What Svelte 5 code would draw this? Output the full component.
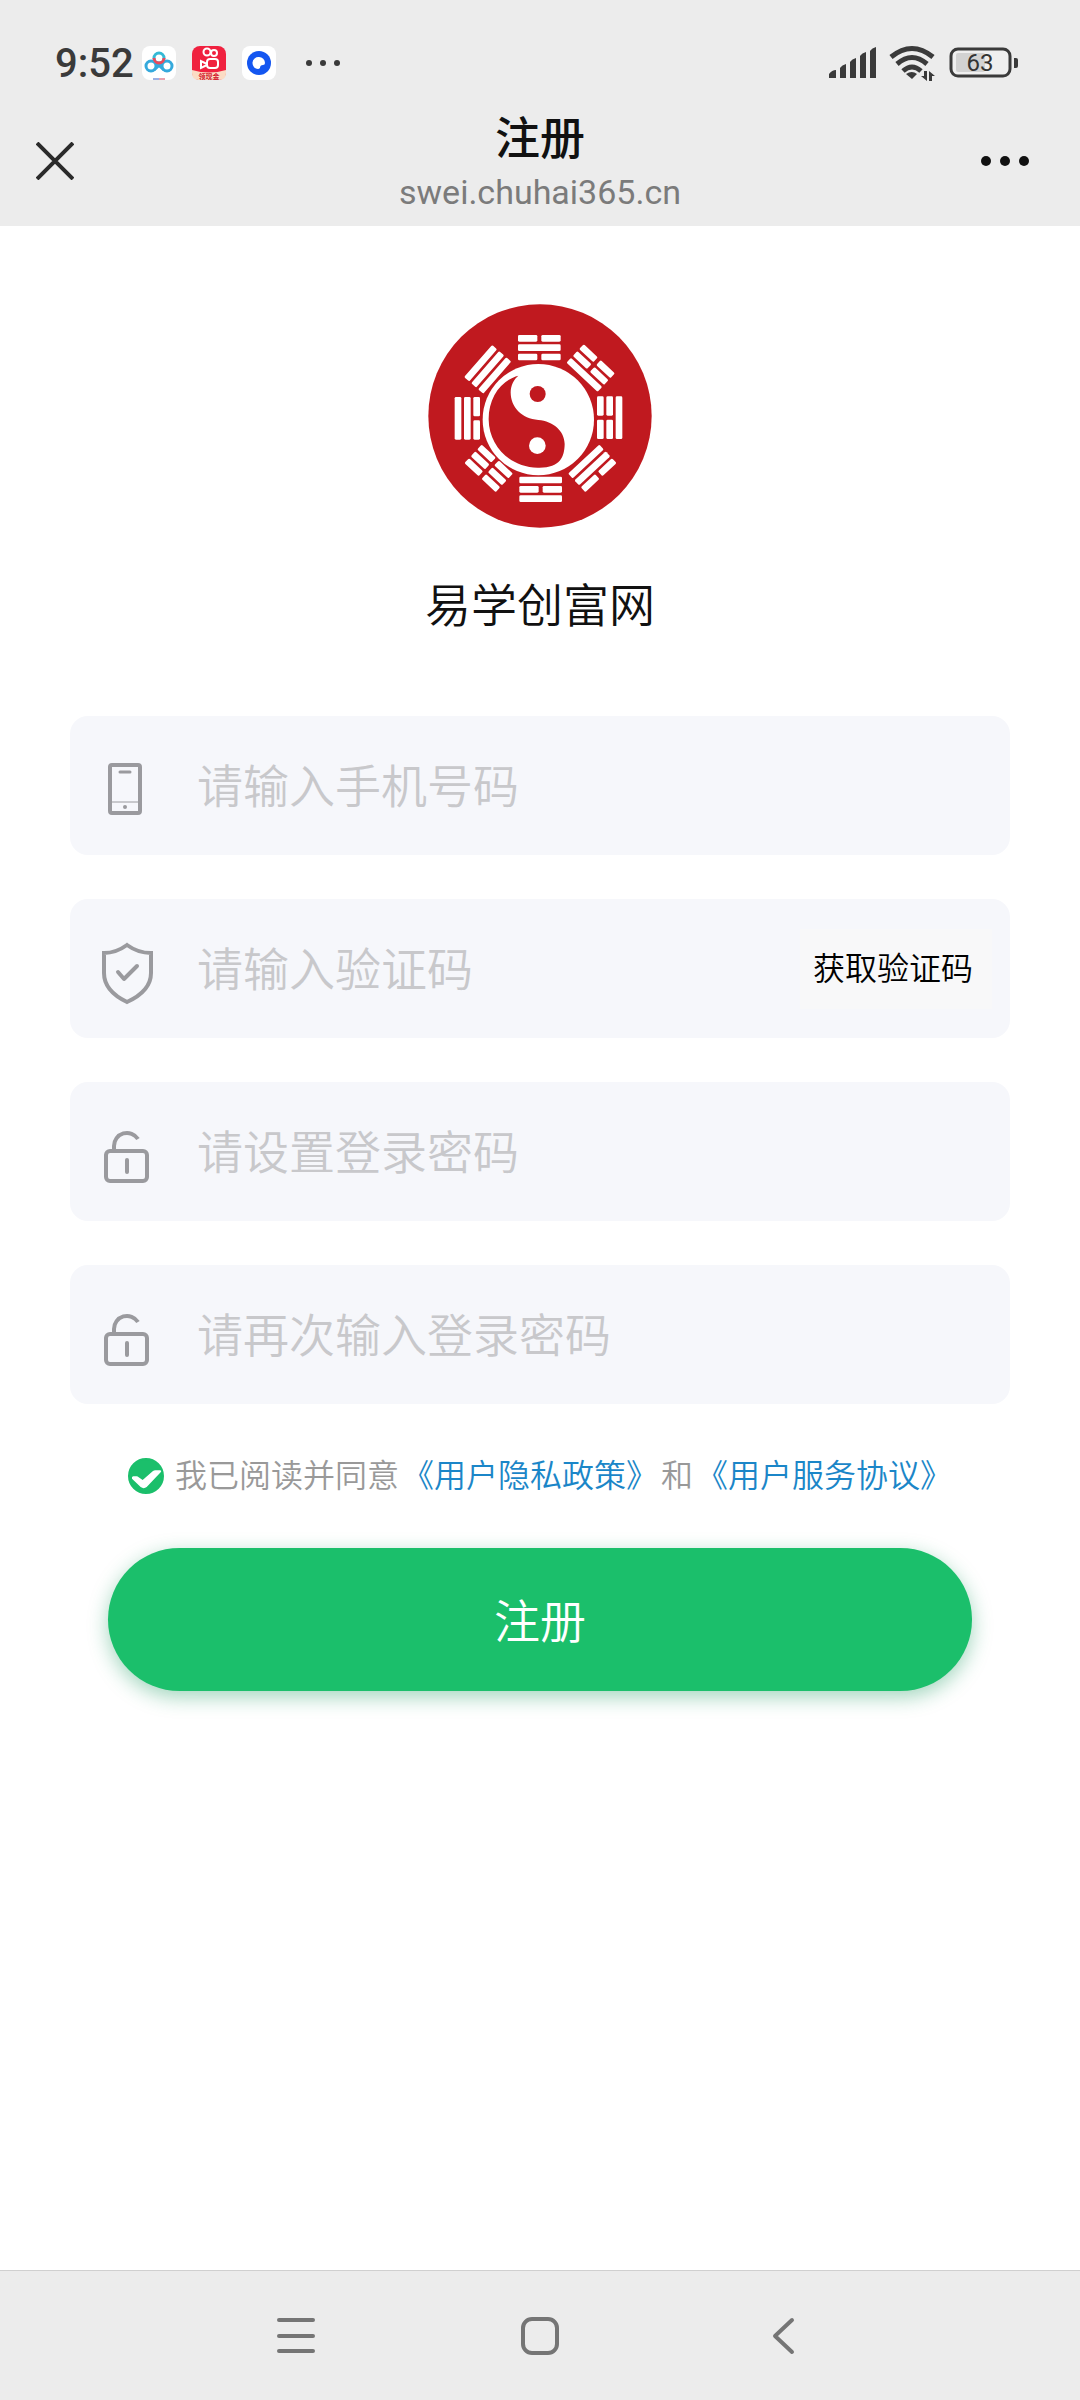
<script lang="ts">
	type Trigram = { x: number; y: number; angle: number; bars: boolean[] };

	// bars run from the rim to the centre, true is an unbroken line
	const trigrams: Trigram[] = [
		{ x: 388, y: 171, angle: 0, bars: [false, true, false] },
		{ x: 542, y: 232, angle: 43, bars: [false, false, true] },
		{ x: 599, y: 381, angle: 90, bars: [true, false, false] },
		{ x: 547, y: 533, angle: 137, bars: [false, true, true] },
		{ x: 392, y: 596, angle: 180, bars: [true, false, true] },
		{ x: 236, y: 533, angle: 223, bars: [false, false, false] },
		{ x: 172, y: 383, angle: 270, bars: [true, true, false] },
		{ x: 233, y: 236, angle: 311, bars: [true, true, true] }
	];

	const fields = [
		{ id: 'phone', icon: 'phone', type: 'tel', placeholder: '请输入手机号码' },
		{ id: 'code', icon: 'shield', type: 'text', placeholder: '请输入验证码' },
		{ id: 'password', icon: 'lock', type: 'password', placeholder: '请设置登录密码' },
		{ id: 'repeat', icon: 'lock', type: 'password', placeholder: '请再次输入登录密码' }
	];

	let values: Record<string, string> = $state({ phone: '', code: '', password: '', repeat: '' });
	let agreed = $state(true);
</script>

<div class="page">
	<header>
		<div class="status">
			<span class="time">9:52</span>
			<svg class="app" viewBox="0 0 34 34">
				<rect width="34" height="34" rx="8" fill="#fff" />
				<g fill="none" stroke-width="3">
					<circle cx="9" cy="20" r="5" stroke="#35a9dc" />
					<circle cx="25" cy="20" r="5" stroke="#35a9dc" />
					<path d="M12 24L22 15M22 24L12 15" stroke="#35a9dc" />
					<circle cx="17" cy="12" r="5" stroke="#35b9d5" fill="#fff" />
					<path d="M12 12a5 5 0 0 0 10 0" stroke="#e94a5c" />
				</g>
				<path d="M11 33h6" stroke="#3a62c8" stroke-width="1" />
				<path d="M17 33h6" stroke="#d2445c" stroke-width="1" />
			</svg>
			<svg class="app" viewBox="0 0 34 34">
				<rect width="34" height="34" rx="8" fill="#f0213f" />
				<path d="M0 24q17 5 34 0v3q0 7-7 7H7q-7 0-7-7z" fill="#fbdcc4" />
				<g fill="none" stroke="#fff" stroke-width="2">
					<circle cx="15" cy="6" r="3.500" />
					<circle cx="22" cy="7" r="3" />
					<rect x="15" y="13" width="11" height="9" rx="3" />
					<path d="M15 18l-6-3v7l6-3" />
				</g>
				<text x="17" y="33" text-anchor="middle" font-size="7" font-weight="700" fill="#d3192c">领现金</text>
			</svg>
			<svg class="app" viewBox="0 0 34 34">
				<rect width="34" height="34" rx="8" fill="#fff" />
				<circle cx="17" cy="17" r="12" fill="#1456f0" />
				<path d="M17 11a6 6 0 0 1 6 6q0 2-2 2-3 0-3 3-1 1-2 1a6 6 0 0 1 1-12z" fill="#fff" />
			</svg>
			<svg class="dots" viewBox="0 0 40 10" fill="#3a3a3a">
				<circle cx="6" cy="5" r="3" />
				<circle cx="20" cy="5" r="3" />
				<circle cx="34" cy="5" r="3" />
			</svg>
			<svg class="signal" viewBox="0 0 48 32" fill="#3a3a3a">
				<path d="M0 31v-4q3-4 7-4v8zM11 31V21q2-3 6-4v14zM21 31V15q2-3 6-4v20zM31 31V9q2-3 6-4v26zM41 31V4q2-3 6-4v31z" />
			</svg>
			<svg class="wifi" viewBox="0 0 46 36">
				<g fill="none" stroke="#3a3a3a" stroke-width="5">
					<path d="M2 12q21-17 42 0" />
					<path d="M8 19q15-13 30 0" />
					<path d="M14 26q9-8 18 0" />
				</g>
				<path d="M17 29q6-4 11 0l-5 5z" fill="#3a3a3a" />
				<path d="M35 26h3v10l-6-5h3zM40 36V26l6 5h-3v5z" fill="#3a3a3a" />
			</svg>
			<svg class="battery" viewBox="0 0 70 32">
				<rect x="2" y="2" width="59" height="27" rx="7" fill="#efefef" stroke="#3a3a3a" stroke-width="3" />
				<rect x="7" y="6" width="29" height="19" rx="2" fill="#d2d2d2" />
				<path d="M65 11h2q2 0 2 2v6q0 2-2 2h-2z" fill="#3a3a3a" />
				<text x="31" y="24" text-anchor="middle" font-size="24" fill="#333">63</text>
			</svg>
		</div>
		<div class="titlebar">
			<button class="bar-button" aria-label="关闭">
				<svg class="close" viewBox="0 0 38 38">
					<path d="M1 1l36 36M37 1L1 37" stroke="#2a2a2a" stroke-width="4" />
				</svg>
			</button>
			<div class="heading">
				<h1>注册</h1>
				<span class="host">swei.chuhai365.cn</span>
			</div>
			<button class="bar-button" aria-label="更多">
				<svg class="more" viewBox="0 0 50 12" fill="#111">
					<circle cx="6" cy="6" r="5" />
					<circle cx="25" cy="6" r="5" />
					<circle cx="44" cy="6" r="5" />
				</svg>
			</button>
		</div>
	</header>

	<main>
		<svg class="logo" viewBox="54 40 672 672">
			<circle cx="390" cy="376" r="335" fill="#c0191f" />
			{#each trigrams as t}
				<g transform="translate({t.x} {t.y}) rotate({t.angle})" fill="#fff">
					{#each t.bars as solid, i}
						{#if solid}
							<rect x="-64" y={i * 28 - 38} width="128" height="20" rx="4" />
						{:else}
							<rect x="-64" y={i * 28 - 38} width="58" height="20" rx="4" />
							<rect x="6" y={i * 28 - 38} width="58" height="20" rx="4" />
						{/if}
					{/each}
				</g>
			{/each}
			<circle cx="385" cy="387" r="167" fill="#fff" />
			<path d="M325 255C270 270 235 325 236 387C237 465 300 530 383 531C450 533 463 500 464 460C463 420 430 392 385 388C335 384 302 350 302 305C302 285 312 265 325 255Z" fill="#c0191f" />
			<circle cx="383" cy="310" r="24" fill="#c0191f" />
			<circle cx="382" cy="465" r="25" fill="#fff" />
		</svg>
		<h2>易学创富网</h2>

		<form onsubmit={(e) => e.preventDefault()}>
			{#each fields as field}
				<div class="field">
					<label for={field.id} aria-label={field.placeholder}>
						<svg class="icon" viewBox="0 0 60 80" fill="none" stroke="#9a9a9e" stroke-width="4">
							{#if field.icon === 'phone'}
								<rect x="10" y="21" width="30" height="48" rx="2" />
								<path d="M20 28h10" stroke-width="3" stroke-linecap="round" />
								<path d="M11 58h28" stroke-width="1" />
								<circle cx="25" cy="63" r="2" fill="#9a9a9e" stroke="none" />
							{:else if field.icon === 'shield'}
								<path d="M27 18Q16 26 4 26V46Q4 64 27 75Q51 64 51 46V26Q38 26 27 18Z" />
								<path d="M18 45l6 7L37 39" stroke-linecap="round" stroke-linejoin="round" />
							{:else}
								<rect x="6" y="41" width="41" height="30" rx="4" />
								<path d="M14 41V36A13 13 0 0 1 38 29" />
								<path d="M27 50v12" stroke-linecap="round" />
							{/if}
						</svg>
					</label>
					<input id={field.id} type={field.type} placeholder={field.placeholder} bind:value={values[field.id]}>
					{#if field.id === 'code'}
						<button type="button" class="send">获取验证码</button>
					{/if}
				</div>
			{/each}

			<div class="agreement">
				<label>
					<span class="tick">
						<input type="checkbox" bind:checked={agreed}>
						{#if agreed}
							<svg viewBox="84 84 108 108">
								<path d="M96 146Q94 140 100 139L110 139Q113 139 116 142L128 150L158 124Q162 121 166 121L180 121Q186 122 182 127L140 171Q131 178 122 171Z" fill="#fff" />
							</svg>
						{/if}
					</span>
					我已阅读并同意
				</label>
				<a href="#privacy">《用户隐私政策》</a>
				<span>和</span>
				<a href="#service">《用户服务协议》</a>
			</div>

			<button class="submit">注册</button>
		</form>
	</main>

	<nav>
		<button aria-label="菜单">
			<svg viewBox="0 0 40 40">
				<path d="M3 4h34M3 20h34M3 35h34" />
			</svg>
		</button>
		<button aria-label="主页">
			<svg viewBox="0 0 40 40">
				<rect x="3" y="3" width="34" height="34" rx="9" />
			</svg>
		</button>
		<button aria-label="返回">
			<svg viewBox="0 0 40 40">
				<path d="M28 4L11 20L28 36" />
			</svg>
		</button>
	</nav>
</div>

<style>
	:global(body) {
		background: #fff;
	}

	.page {
		display: flex;
		flex-direction: column;
		min-height: 100vh;
		font-family: Roboto, "Noto Sans CJK SC", sans-serif;
		color: #111;
	}

	button {
		font: inherit;
		padding: 0;
		border: none;
		background: none;
		cursor: pointer;
	}

	svg {
		display: block;
		flex: none;
	}

	h1,
	h2 {
		margin: 0;
	}

	header {
		background: #ececec;
	}

	.status {
		display: flex;
		align-items: center;
		gap: 16px;
		height: 74px;
		padding: 26px 61px 0 55px;
	}
	.time {
		margin-right: -8px;
		font-size: 40px;
		font-weight: 500;
		color: #3a3a3a;
	}
	.app {
		width: 34px;
		height: 34px;
	}
	.dots {
		width: 40px;
		height: 10px;
		margin: 0 auto 0 11px;
	}
	.signal {
		width: 48px;
		height: 32px;
	}
	.wifi {
		width: 46px;
		height: 36px;
		margin: 0 -2px 0 -4px;
	}
	.battery {
		width: 70px;
		height: 32px;
	}

	.titlebar {
		display: flex;
		align-items: center;
		justify-content: space-between;
		height: 122px;
		padding: 0 48px 4px 28px;
	}
	.bar-button {
		display: flex;
		align-items: center;
		justify-content: center;
		width: 54px;
		height: 80px;
	}
	.close {
		width: 38px;
		height: 38px;
	}
	.more {
		width: 50px;
		height: 12px;
	}
	.heading {
		display: flex;
		flex-direction: column;
		align-items: center;
		padding: 6px 0 0 20px;
	}
	h1 {
		font-size: 45px;
		font-weight: 500;
		line-height: 56px;
	}
	.host {
		font-size: 34px;
		line-height: 48px;
		color: #7b7b7b;
	}

	main {
		display: flex;
		flex: 1;
		flex-direction: column;
		align-items: center;
		padding: 78px 70px;
	}
	.logo {
		width: 224px;
		height: 224px;
	}
	h2 {
		margin: 44px 0 76px;
		font-size: 46px;
		font-weight: 350;
		line-height: 68px;
	}

	form {
		display: flex;
		flex-direction: column;
		gap: 44px;
		width: 100%;
		font-weight: 350;
	}
	.field {
		display: flex;
		align-items: center;
		height: 139px;
		padding: 0 18px 0 30px;
		border-radius: 18px;
		box-sizing: border-box;
		background: #f6f7fb;
	}
	.icon {
		width: 60px;
		height: 80px;
		margin: 0 37px 4px 0;
	}
	.field input {
		flex: 1;
		min-width: 0;
		padding: 3px 0 0;
		font: inherit;
		font-size: 46px;
		color: #111;
		border: none;
		outline: none;
		background: none;
	}
	.field input::placeholder {
		color: #c8c8cb;
	}
	.send {
		width: 192px;
		height: 80px;
		padding: 0 6px 6px 0;
		font-size: 32px;
		color: #000;
		background: #f8f8f9;
	}

	.agreement {
		display: flex;
		align-items: center;
		justify-content: center;
		gap: 3px;
		font-size: 32px;
		line-height: 56px;
		color: #999;
	}
	.agreement label {
		display: flex;
		align-items: center;
		gap: 11px;
	}
	.agreement a {
		color: #1b86c8;
		text-decoration: none;
	}
	.tick {
		display: grid;
		width: 36px;
		height: 36px;
	}
	.tick input {
		grid-area: 1 / 1;
		width: 36px;
		height: 36px;
		margin: 0;
		appearance: none;
		border: 2px solid #1bbf6b;
		border-radius: 50%;
	}
	.tick input:checked {
		background: #1bbf6b;
	}
	.tick svg {
		grid-area: 1 / 1;
		z-index: 1;
		pointer-events: none;
	}

	.submit {
		height: 143px;
		margin: 0 38px;
		padding-bottom: 4px;
		font-size: 46px;
		color: #fff;
		border-radius: 72px;
		background: #1bbf6b;
		box-shadow: 0 6px 20px rgba(20, 150, 90, 0.4);
	}

	nav {
		display: flex;
		align-items: center;
		justify-content: center;
		gap: 184px;
		height: 129px;
		border-top: 1px solid #d0d0d0;
		background: #ececec;
	}
	nav button {
		display: flex;
		align-items: center;
		justify-content: center;
		width: 60px;
		height: 60px;
	}
	nav svg {
		width: 40px;
		height: 40px;
		fill: none;
		stroke: #757575;
		stroke-width: 4;
		stroke-linecap: round;
		stroke-linejoin: round;
	}
</style>
